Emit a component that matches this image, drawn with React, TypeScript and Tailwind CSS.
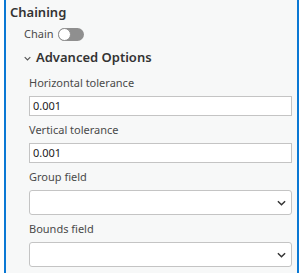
import React from 'react';

const Chevron: React.FC<{ className?: string }> = ({ className }) => (
  <svg viewBox="0 0 10 6" className={className} fill="none" stroke="currentColor" strokeWidth="1.6">
    <path d="M1 1l4 4 4-4" />
  </svg>
);

const Field: React.FC<{ label: string; value?: string; select?: boolean }> = ({ label, value, select }) => (
  <div className="flex flex-col">
    <label className="text-[11px] leading-[16px] text-[#4a4a4a] mb-[5px]">{label}</label>
    {select ? (
      <div className="h-[25px] bg-white border border-[#c4c4c4] rounded-[3px] flex items-center justify-end pr-[5px]">
        <Chevron className="w-[9px] h-[6px] text-[#333]" />
      </div>
    ) : (
      <div className="h-[20px] bg-white border border-[#c4c4c4] flex items-center px-[3px] text-[11px] text-[#222]">
        {value}
      </div>
    )}
  </div>
);

const App: React.FC = () => {
  return (
    <div className="w-[301px] h-[273px] bg-white pl-[4px] pr-[2px]" style={{ fontFamily: '"Noto Sans", sans-serif' }}>
      <div className="h-full bg-[#f7f8f8] border-l-2 border-r-2 border-[#0a78d4] pl-[4px] pr-[5px]">
        <div className="text-[13px] font-semibold text-[#333] leading-[18px] pt-[3px]">Chaining</div>
        <div className="pl-[14px] flex items-center gap-[4px] mt-[5px] h-[16px]">
          <span className="text-[11px] text-[#4a4a4a]">Chain</span>
          <span className="relative w-[26px] h-[13px] rounded-full bg-[#8f8f8f]">
            <span className="absolute left-0 top-0 w-[13px] h-[13px] rounded-full bg-white border border-[#8f8f8f]" />
          </span>
        </div>
        <div className="pl-[14px] flex items-center gap-[5px] mt-[7px] h-[18px]">
          <Chevron className="w-[7px] h-[5px] text-[#555]" />
          <span className="text-[13px] font-semibold text-[#333]">Advanced Options</span>
        </div>
        <div className="pl-[19px] flex flex-col gap-[6px] mt-[8px]">
          <Field label="Horizontal tolerance" value="0.001" />
          <Field label="Vertical tolerance" value="0.001" />
          <Field label="Group field" select />
          <Field label="Bounds field" select />
        </div>
      </div>
    </div>
  );
};

export default App;
